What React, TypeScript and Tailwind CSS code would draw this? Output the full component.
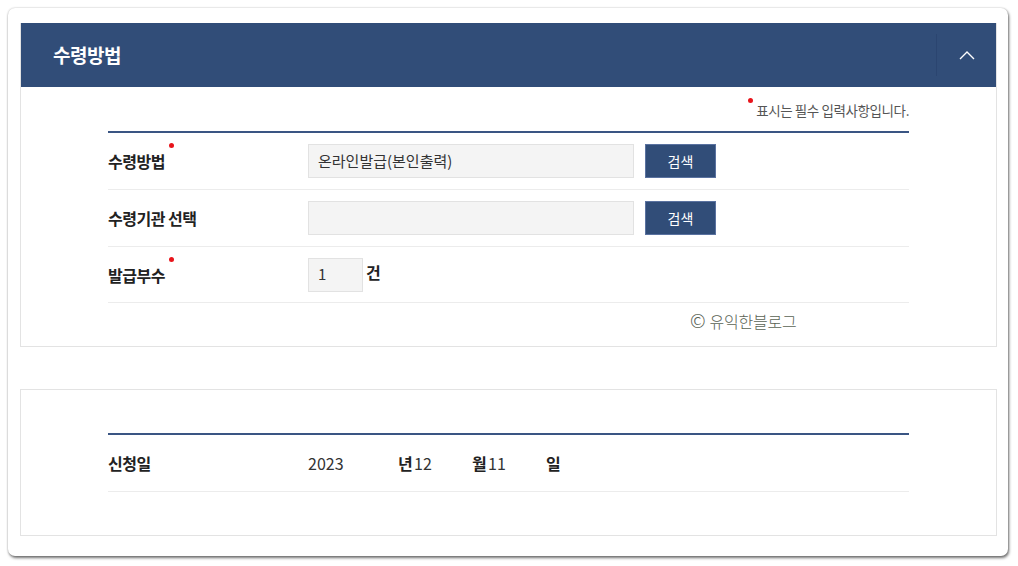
import React from "react";

const font = { fontFamily: '"Noto Sans CJK KR", "Noto Sans", sans-serif' };

function Dot() {
  return <span className="absolute -right-[9px] top-[-6px] w-[5px] h-[5px] rounded-full bg-[#e8141b]" />;
}

function Label({ text, req }: { text: string; req?: boolean }) {
  return (
    <div className="w-[200px] shrink-0">
      <span className="relative text-[16px] font-bold text-[#222] tracking-[-0.5px]">
        {text}
        {req && <Dot />}
      </span>
    </div>
  );
}

function Btn() {
  return (
    <button className="ml-[11px] w-[71px] h-[34px] bg-[#314d78] text-white text-[14px] border border-[#5a72a0]">
      검색
    </button>
  );
}

export default function App() {
  return (
    <div className="w-[1018px] h-[566px] bg-white pt-[8px] pl-[8px]" style={font}>
      <div className="w-[1000px] h-[548px] bg-white rounded-[7px] shadow-[1px_2px_3px_rgba(0,0,0,0.55),0_0_2px_rgba(0,0,0,0.25)] pt-[15px] pl-[12px]">
        {/* Panel 1 */}
        <div className="w-[977px] border border-[#e3e3e3] border-t-0">
          <div className="h-[64px] bg-[#314d78] flex items-center justify-between">
            <h2 className="pl-[32px] text-white text-[19px] font-bold tracking-[-0.5px]">수령방법</h2>
            <div className="h-[42px] w-[60px] border-l border-[#2b4570] flex items-center justify-center">
              <svg width="16" height="10" viewBox="0 0 16 10" fill="none">
                <path d="M1 9 L8 2 L15 9" stroke="white" strokeWidth="1.4" />
              </svg>
            </div>
          </div>
          <div className="px-[87px]">
            <div className="h-[44px] flex items-center justify-end">
              <span className="relative text-[13.5px] text-[#555] tracking-[-0.4px] mt-[2px]">
                <span className="absolute -left-[8px] top-[-2px] w-[5px] h-[5px] rounded-full bg-[#e8141b]" />
                표시는 필수 입력사항입니다.
              </span>
            </div>
            <div className="border-t-2 border-[#3a5583]">
              <div className="h-[57px] flex items-center border-b border-[#ececec]">
                <Label text="수령방법" req />
                <div className="w-[326px] h-[34px] bg-[#f4f4f4] border border-[#e2e2e2] flex items-center px-[9px] text-[15px] text-[#333]">
                  온라인발급(본인출력)
                </div>
                <Btn />
              </div>
              <div className="h-[57px] flex items-center border-b border-[#ececec]">
                <Label text="수령기관 선택" />
                <div className="w-[326px] h-[34px] bg-[#f4f4f4] border border-[#e2e2e2]" />
                <Btn />
              </div>
              <div className="h-[56px] flex items-center border-b border-[#ececec]">
                <Label text="발급부수" req />
                <div className="w-[55px] h-[34px] bg-[#f4f4f4] border border-[#e2e2e2] flex items-center px-[9px] text-[15px] text-[#333]">
                  1
                </div>
                <span className="ml-[3px] text-[16px] font-bold text-[#222] -mt-[5px]">건</span>
              </div>
              <div className="h-[43px] flex items-center">
                <span className="ml-[582px] -mt-[8px] text-[16px] text-[#5a6355] tracking-[-0.2px] font-light">
                  <span className="text-[19px] leading-none mr-[4px]">©</span>유익한블로그
                </span>
              </div>
            </div>
          </div>
        </div>

        {/* Panel 2 */}
        <div className="mt-[42px] w-[977px] h-[147px] border border-[#e3e3e3] px-[87px] pt-[43px]">
          <div className="border-t-2 border-[#3a5583]">
            <div className="h-[57px] flex items-center border-b border-[#ececec]">
              <Label text="신청일" />
              <span className="w-[90px] text-[16px] text-[#333]">2023</span>
              <span className="w-[16px] text-[16px] font-bold text-[#222]">년</span>
              <span className="w-[58px] text-[16px] text-[#333]">12</span>
              <span className="w-[16px] text-[16px] font-bold text-[#222]">월</span>
              <span className="w-[58px] text-[16px] text-[#333]">11</span>
              <span className="w-[16px] text-[16px] font-bold text-[#222]">일</span>
            </div>
          </div>
        </div>
      </div>
    </div>
  );
}
